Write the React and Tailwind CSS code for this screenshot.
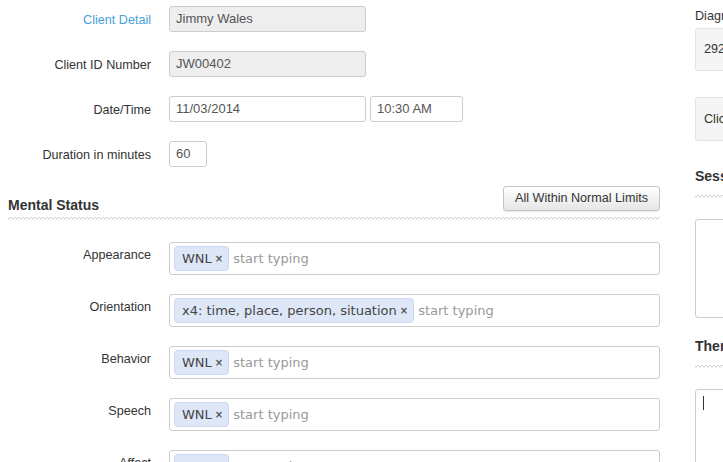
import React from "react";

const sans = { fontFamily: '"Liberation Sans", Arial, sans-serif' };

function Wave({ id }) {
  return (
    <svg className="block h-[4px] w-full" aria-hidden="true">
      <defs>
        <pattern id={id} width="4" height="4" patternUnits="userSpaceOnUse">
          <path d="M0 1 Q1 3.6 2 1 T4 1" fill="none" stroke="#c9c9c9" strokeWidth="0.9" />
        </pattern>
      </defs>
      <rect width="100%" height="4" fill={`url(#${id})`} />
    </svg>
  );
}

function Row({ label, blue, children, className = "" }) {
  return (
    <div className={`flex items-center ${className}`}>
      <div className={`w-[143px] shrink-0 pt-[1px] text-right text-[12.6px] leading-[16px] ${blue ? "text-[#4a9fd5]" : "text-[#333]"}`}>
        {label}
      </div>
      <div className="ml-[18px] flex gap-[4px]">{children}</div>
    </div>
  );
}

function Input({ value, w, ro }) {
  return (
    <div
      className={`flex h-[26px] items-center rounded-[3px] border border-[#ccc] px-[6px] text-[13px] text-[#555] ${ro ? "bg-[#eeeeee]" : "bg-white"} ${w}`}
    >
      {value}
    </div>
  );
}

function Chip({ text }) {
  return (
    <div className="flex h-[25px] items-center rounded-[4px] border border-[#cad8f3] bg-[#dee7f8] pl-[7px] pr-[5px] text-[13px] text-[#444]" style={{ fontFamily: '"DejaVu Sans", Verdana, sans-serif' }}>
      <span>{text}</span>
      <span className="ml-[3px] text-[10px] font-bold text-[#555]">×</span>
    </div>
  );
}

function TagRow({ label, tag }) {
  return (
    <div className="flex items-start">
      <div className="w-[143px] shrink-0 pt-[5px] text-right text-[12.6px] leading-[16px] text-[#333]">{label}</div>
      <div className="ml-[18px] flex h-[33px] w-[491px] items-center rounded-[3px] border border-[#ccc] bg-white px-[4px]">
        <Chip text={tag} />
        <span className="ml-[4px] text-[13px] text-[#999]" style={{ fontFamily: '"DejaVu Sans", Verdana, sans-serif' }}>
          start typing
        </span>
      </div>
    </div>
  );
}

export default function App() {
  return (
    <div className="h-[462px] w-[723px] overflow-hidden bg-white" style={sans}>
      <div className="flex">
        <div className="ml-[8px] w-[652px] shrink-0 pt-[6px]">
          <div className="flex flex-col gap-[19px]">
            <Row label="Client Detail" blue>
              <Input value="Jimmy Wales" w="w-[197px]" ro />
            </Row>
            <Row label="Client ID Number">
              <Input value="JW00402" w="w-[197px]" ro />
            </Row>
            <Row label="Date/Time">
              <Input value="11/03/2014" w="w-[197px]" />
              <Input value="10:30 AM" w="w-[93px]" />
            </Row>
            <Row label="Duration in minutes">
              <Input value="60" w="w-[38px]" />
            </Row>
          </div>

          <div className="mt-[19px] flex items-end justify-between">
            <div className="mb-[-2px] text-[14px] font-bold leading-[16px] text-[#333]">Mental Status</div>
            <button className="h-[25px] w-[157px] rounded-[3px] border border-[#c4c4c4] bg-gradient-to-b from-white to-[#e6e6e6] text-[12.6px] text-[#333] shadow-[0_1px_1px_rgba(0,0,0,0.08)]">
              All Within Normal Limits
            </button>
          </div>
          <div className="mt-[6px]">
            <Wave id="w1" />
          </div>

          <div className="mt-[21px] flex flex-col gap-[19px]">
            <TagRow label="Appearance" tag="WNL" />
            <TagRow label="Orientation" tag="x4: time, place, person, situation" />
            <TagRow label="Behavior" tag="WNL" />
            <TagRow label="Speech" tag="WNL" />
            <TagRow label="Affect" tag="WNL" />
          </div>
        </div>

        <div className="ml-[35px] w-[300px] shrink-0">
          <div className="mt-[8px] text-[12.6px] leading-[16px] text-[#333]">Diagnosis</div>
          <div className="mt-[4px] flex h-[43px] items-center rounded-[3px] border border-[#e3e3e3] bg-[#f5f5f5] px-[8px] text-[12.6px] text-[#333]">
            292.9 Unspecified
          </div>
          <div className="mt-[26px] flex h-[44px] items-center rounded-[3px] border border-[#e3e3e3] bg-[#f5f5f5] px-[8px] text-[12.6px] text-[#333]">
            Click to add
          </div>
          <div className="mt-[27px] text-[14px] font-bold leading-[16px] text-[#333]">Session Notes</div>
          <div className="mt-[11px]">
            <Wave id="w2" />
          </div>
          <div className="mt-[20px] h-[99px] rounded-[3px] border border-[#ccc] bg-white" />
          <div className="mt-[20px] text-[14px] font-bold leading-[16px] text-[#333]">Therapeutic Intervention</div>
          <div className="mt-[11px]">
            <Wave id="w3" />
          </div>
          <div className="mt-[20px] h-[100px] rounded-[3px] border border-[#ccc] bg-white pl-[7px] pt-[6px]">
            <div className="h-[14px] w-px bg-[#333]" />
          </div>
        </div>
      </div>
    </div>
  );
}
